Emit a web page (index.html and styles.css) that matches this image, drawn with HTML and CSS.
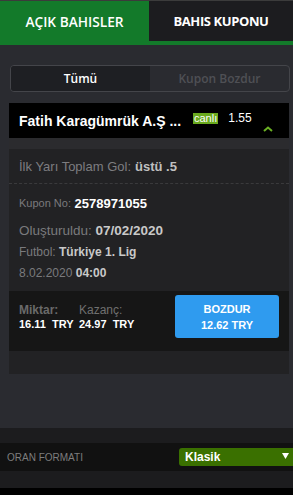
FILE: index.html
```html
<!DOCTYPE html>
<html lang="tr">
<head>
<meta charset="utf-8">
<link rel="stylesheet" href="styles.css">
</head>
<body>
<div class="topline"></div>
<nav class="tabs">
  <div class="tab tab-active">AÇIK BAHISLER</div>
  <div class="tab tab-idle">BAHIS KUPONU</div>
</nav>
<div class="tabbar"></div>
<main class="content">
  <div class="segment">
    <div class="seg seg-on">Tümü</div>
    <div class="seg seg-off">Kupon Bozdur</div>
  </div>
  <section class="card">
    <header class="card-head">
      <span class="match">Fatih Karagümrük A.Ş ...</span>
      <span class="live">canlı</span>
      <span class="odd">1.55</span>
      <svg class="chev" width="10" height="6" viewBox="0 0 10 6"><path d="M1 5 L5 1.5 L9 5" fill="none" stroke="#6ab023" stroke-width="2"/></svg>
    </header>
    <div class="band"></div>
    <div class="pick">İlk Yarı Toplam Gol: <b>üstü .5</b></div>
    <div class="info">
      <div class="row row-kupon"><span class="lbl-s">Kupon No:</span>&nbsp;<b class="val-w">2578971055</b></div>
      <div class="row row-date">Oluşturuldu:&nbsp;<b>07/02/2020</b></div>
      <div class="row row-lig">Futbol:&nbsp;<b>Türkiye 1. Lig</b></div>
      <div class="row row-time">8.02.2020&nbsp;<b>04:00</b></div>
    </div>
    <div class="amounts">
      <div class="amt amt-first">
        <div class="amt-lbl amt-lbl-b">Miktar:</div>
        <div class="amt-val">16.11&nbsp; TRY</div>
      </div>
      <div class="amt">
        <div class="amt-lbl">Kazanç:</div>
        <div class="amt-val">24.97&nbsp; TRY</div>
      </div>
      <button class="cashout">BOZDUR<br>12.62 TRY</button>
    </div>
    <div class="card-foot"></div>
  </section>
</main>
<footer class="footer">
  <div class="fband"></div>
  <div class="frow">
    <span class="flabel">ORAN FORMATI</span>
    <div class="select">Klasik<svg class="arrow" width="7" height="6" viewBox="0 0 7 6"><path d="M0 0 H7 L3.5 6 Z" fill="#fff"/></svg></div>
  </div>
  <div class="fband2"></div>
  <div class="fblack"></div>
</footer>
</body>
</html>
```
FILE: styles.css
```css
html, body { margin: 0; padding: 0; }
body {
  width: 293px;
  height: 495px;
  overflow: hidden;
  background: #2a2b30;
  font-family: "Liberation Sans", Arial, sans-serif;
  display: flex;
  flex-direction: column;
}
.topline { height: 1px; background: #3b3b3b; }
.tabs { display: flex; height: 40px; }
.tab {
  display: flex; align-items: center; justify-content: center;
  color: #fff;
  font-family: "Open Sans", "Liberation Sans", sans-serif;
}
.tab-active { width: 149px; background: #137a2a; font-weight: 600; font-size: 13.7px; }
.tab-idle { flex: 1; background: #1c1c1f; font-weight: 700; font-size: 13px; letter-spacing: -0.4px; }
.tabbar { height: 4px; background: #137a2a; }
.content { flex: 1; padding: 20px 3px 0 9px; }
.segment {
  display: flex; height: 25px; margin-left: 1px;
  border: 1px solid #44454a; border-radius: 4px; overflow: hidden;
  font-family: "Open Sans", "Liberation Sans", sans-serif;
  font-size: 12px;
}
.seg { flex: 1; display: flex; align-items: center; justify-content: center; }
.seg-on { background: #1e1f23; color: #fff; font-weight: 600; }
.seg-off { color: #4f5055; font-weight: 600; }
.card { margin-top: 11px; margin-right: 1px; background: #222224; }
.card-head {
  height: 35px; background: #000; display: flex; align-items: center;
  padding-left: 10px; position: relative;
}
.match { color: #fff; font-weight: 700; font-size: 14px; width: 174px; }
.live {
  background: #6aaa1e; color: #fff; font-size: 11px; line-height: 10px;
  padding: 0 1px 1px; margin-top: -5px;
}
.odd { color: #fff; font-size: 12px; margin-left: 10px; margin-top: -5px; }
.chev { position: absolute; left: 254px; top: 23px; }
.band { height: 11px; background: #2b2b2e; }
.pick {
  height: 34px; display: flex; align-items: center; gap: 4px;
  padding-left: 10px; color: #7d7d80; font-size: 13px;
  border-bottom: 1px dashed #3a3a3c;
}
.pick b { color: #c0c0c0; }
.info { padding: 10px 10px 9px; display: flex; flex-direction: column; color: #7a7a7d; }
.info b { color: #c9c9c9; }
.row { height: 18px; display: flex; align-items: center; }
.row-kupon { font-size: 13px; }
.lbl-s { font-size: 11px; }
.row-kupon .val-w { color: #fff; }
.row-date { font-size: 13.5px; margin-top: 9px; }
.row-lig { font-size: 12px; margin-top: 4px; }
.row-time { font-size: 12px; margin-top: 3px; }
.amounts {
  height: 60px; background: #161616; display: flex; align-items: flex-start;
  padding: 0 10px; box-sizing: border-box;
}
.amt { margin-top: 12px; }
.amt-first { width: 60px; }
.amt-lbl { color: #707070; font-size: 12px; line-height: 14px; }
.amt-lbl-b { font-weight: 700; color: #6a6a6a; }
.amt-val { color: #fff; font-size: 11px; font-weight: 700; line-height: 13px; margin-top: 1px; }
.cashout {
  margin-left: auto; margin-top: 4px; width: 104px; height: 43px;
  background: #2f9bef; color: #fff; border: none; border-radius: 3px;
  font-family: "Liberation Sans", Arial, sans-serif; font-weight: 700; font-size: 11px;
  line-height: 16px; padding: 0;
}
.card-foot { height: 23px; }
.footer { display: flex; flex-direction: column; }
.fband { height: 15px; background: #1c1c1e; }
.frow {
  height: 28px; background: #111; display: flex; align-items: center;
  padding-left: 7px;
}
.flabel { color: #7d7d7d; font-size: 10px; }
.select {
  margin-left: auto; width: 114px; height: 18px; background: #3a7000;
  border-radius: 3px 0 0 3px; color: #fff; font-weight: 700; font-size: 12px;
  display: flex; align-items: center; padding-left: 6px; box-sizing: border-box;
}
.arrow { margin-left: auto; margin-right: 4px; margin-top: -3px; }
.fband2 { height: 17px; background: #1c1c1e; }
.fblack { height: 7px; background: #000; }
```
